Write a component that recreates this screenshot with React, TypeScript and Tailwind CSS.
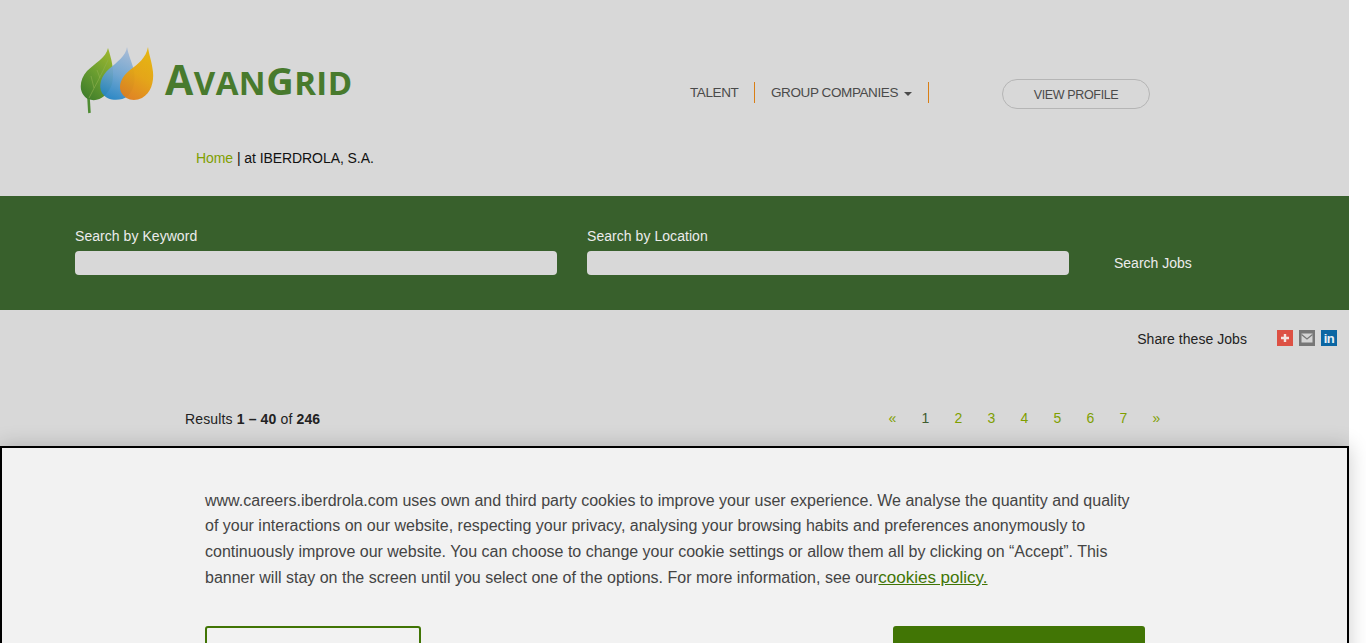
const pages = ["«", "1", "2", "3", "4", "5", "6", "7", "»"];

function LogoMark() {
  return (
    <svg width="76" height="70" viewBox="0 0 76 70" className="shrink-0">
      <defs>
        <linearGradient id="leaf" x1="0.8" y1="0" x2="0.2" y2="1">
          <stop offset="0" stopColor="#9cb62e" />
          <stop offset="0.5" stopColor="#6b9e30" />
          <stop offset="1" stopColor="#3f7d2b" />
        </linearGradient>
        <linearGradient id="blue" x1="0.6" y1="0" x2="0.3" y2="1">
          <stop offset="0" stopColor="#a3b9d6" />
          <stop offset="0.5" stopColor="#6ba3d0" />
          <stop offset="1" stopColor="#1f82c4" />
        </linearGradient>
        <linearGradient id="orange" x1="0.7" y1="0" x2="0.3" y2="1">
          <stop offset="0" stopColor="#e6b408" />
          <stop offset="0.5" stopColor="#e5a30f" />
          <stop offset="1" stopColor="#e07e1c" />
        </linearGradient>
      </defs>
      <path d="M8.5 52 C9 58 9 62 9.5 67" stroke="#4f8c33" strokeWidth="2.6" fill="none" />
      <path d="M28 2 C26 12 15 17 7 25 C-1 34 -2 47 8 53 C18 57 28 50 32 38 C35 24 31 12 28 2 Z" fill="url(#leaf)" />
      <path d="M9 52 C15 40 22 28 28 14 M14 42 L11 30 M20 32 L17 24" stroke="#8fb04f" strokeWidth="1" fill="none" opacity="0.6" />
      <path d="M47 1 C46 10 37 16 29 23 C21 30 18 40 22 47 C27 55 40 56 48 50 C55 43 56 31 53 21 C51 14 48 8 47 1 Z" fill="url(#blue)" opacity="0.93" />
      <path d="M68 1 C66 12 58 18 50 24 C42 30 38 39 41 46 C45 54 54 56 62 52 C71 47 74 36 73 26 C72 16 69 9 68 1 Z" fill="url(#orange)" opacity="0.95" />
    </svg>
  );
}

function Logo() {
  return (
    <div className="flex items-start ml-[80px] mt-[46px] w-[272px] h-[68px]">
      <LogoMark />
      <div className="ml-[9px] mt-[11px] flex items-baseline font-['Open_Sans',sans-serif] font-bold text-[#487a2d] leading-[44px] tracking-[0.45px]">
        <span className="text-[41px]">A</span>
        <span className="text-[33px]">VAN</span>
        <span className="text-[38px]">G</span>
        <span className="text-[33px]">RID</span>
      </div>
    </div>
  );
}

function Nav() {
  return (
    <div className="flex items-start ml-[338px] mt-[82px] text-[13.5px] text-[#4a4a4a] tracking-[-0.4px]">
      <span className="w-[65px] h-[21px] leading-[21px] border-r border-[#d97e14]">TALENT</span>
      <span className="w-[174px] h-[21px] leading-[21px] pl-[16px] border-r border-[#d97e14] flex items-center gap-[6px]">
        <span>GROUP COMPANIES</span>
        <span className="w-0 h-0 mt-[2px] border-x-[4px] border-x-transparent border-t-[4px] border-t-[#4a4a4a]" />
      </span>
      <button
        type="button"
        className="ml-[73px] -mt-[3px] pt-[2px] w-[148px] h-[30px] rounded-full border border-[#b5b5b5] text-[12.5px] text-[#4a4a4a] tracking-[-0.35px]"
      >
        VIEW PROFILE
      </button>
    </div>
  );
}

function SearchField({ label, className }: { label: string; className: string }) {
  return (
    <div className={className}>
      <div className="text-[14px] leading-[20px] tracking-[0.05px] text-[#ececec] mb-[5px]">{label}</div>
      <div className="w-[482px] h-[24px] rounded-[4px] bg-[#d8d8d8]" />
    </div>
  );
}

function ShareIcons() {
  return (
    <div className="flex gap-[6px] ml-[30px]">
      <span className="w-[16px] h-[16px] bg-[#dd5144] flex items-center justify-center">
        <svg width="10" height="10" viewBox="0 0 10 10">
          <path d="M5 1v8M1 5h8" stroke="#f4e4e0" strokeWidth="2.4" />
        </svg>
      </span>
      <span className="w-[16px] h-[16px] bg-[#777777] flex items-center justify-center">
        <svg width="12" height="10" viewBox="0 0 12 10">
          <rect x="0.5" y="0.5" width="11" height="9" fill="#d4d4d4" />
          <path d="M0.5 1.5 L6 6 L11.5 1.5" stroke="#777777" strokeWidth="1.2" fill="none" />
        </svg>
      </span>
      <span className="w-[16px] h-[16px] bg-[#0b66a3] flex items-center justify-center text-[#e8f0f5] font-bold text-[13px] leading-none tracking-[-0.5px]">
        in
      </span>
    </div>
  );
}

function CookieBanner() {
  return (
    <div className="absolute left-0 top-[446px] w-[1349px] h-[260px] bg-[#f2f2f2] border-2 border-black shadow-[0_0_20px_rgba(0,0,0,0.2)]">
      <div className="pl-[203px] pt-[39.85px] w-[1143px] text-[16px] leading-[25.6px] text-[#444444]">
        <p>
          www.careers.iberdrola.com uses own and third party cookies to improve your user experience. We analyse the quantity and quality
          of your interactions on our website, respecting your privacy, analysing your browsing habits and preferences anonymously to
          continuously improve our website. You can choose to change your cookie settings or allow them all by clicking on “Accept”. This
          banner will stay on the screen until you select one of the options. For more information, see our
          <a className="text-[17px] text-[#417505] underline">cookies policy.</a>
        </p>
      </div>
      <div className="flex pl-[203px] mt-[36px]">
        <div className="w-[216px] h-[60px] rounded-[3px] border-2 border-[#417505]" />
        <div className="ml-[472px] w-[252px] h-[60px] rounded-[3px] bg-[#417505]" />
      </div>
    </div>
  );
}

export default function App() {
  return (
    <div className="relative h-[643px] overflow-hidden bg-white font-['Liberation_Sans',Arial,sans-serif]">
      <div className="w-[1349px] h-full bg-[#d8d8d8]">
        {/* header */}
        <div className="h-[196px]">
          <div className="flex items-start">
            <Logo />
            <Nav />
          </div>
          <div className="ml-[196px] mt-[34px] text-[14px] leading-[20px] tracking-[-0.07px] text-[#111111]">
            <a className="text-[#7f9f00]">Home</a> | at IBERDROLA, S.A.
          </div>
        </div>

        {/* search band */}
        <div className="h-[114px] bg-[#38602c] flex pl-[75px] pt-[30px]">
          <SearchField label="Search by Keyword" className="" />
          <SearchField label="Search by Location" className="ml-[30px]" />
          <div className="ml-[45px] mt-[27px] text-[14px] leading-[20px] text-[#ececec]">Search Jobs</div>
        </div>

        {/* share row */}
        <div className="flex justify-end items-start pr-[12px] pt-[20px] h-[56px] text-[14px] leading-[18px] text-[#222222]">
          <span className="tracking-[0.05px]">Share these Jobs</span>
          <ShareIcons />
        </div>

        {/* results row */}
        <div className="flex items-start pl-[185px] mt-[43px] text-[14px] leading-[20px] text-[#222222]">
          <div className="w-[691px] tracking-[0.14px]">
            Results <b>1 – 40</b> of <b>246</b>
          </div>
          <div className="flex -mt-[1px]">
            {pages.map((p) => (
              <span key={p} className={`w-[33px] text-center ${p === "1" ? "text-[#3f5c2f]" : "text-[#7f9f00]"}`}>
                {p}
              </span>
            ))}
          </div>
        </div>
      </div>
      <CookieBanner />
    </div>
  );
}
